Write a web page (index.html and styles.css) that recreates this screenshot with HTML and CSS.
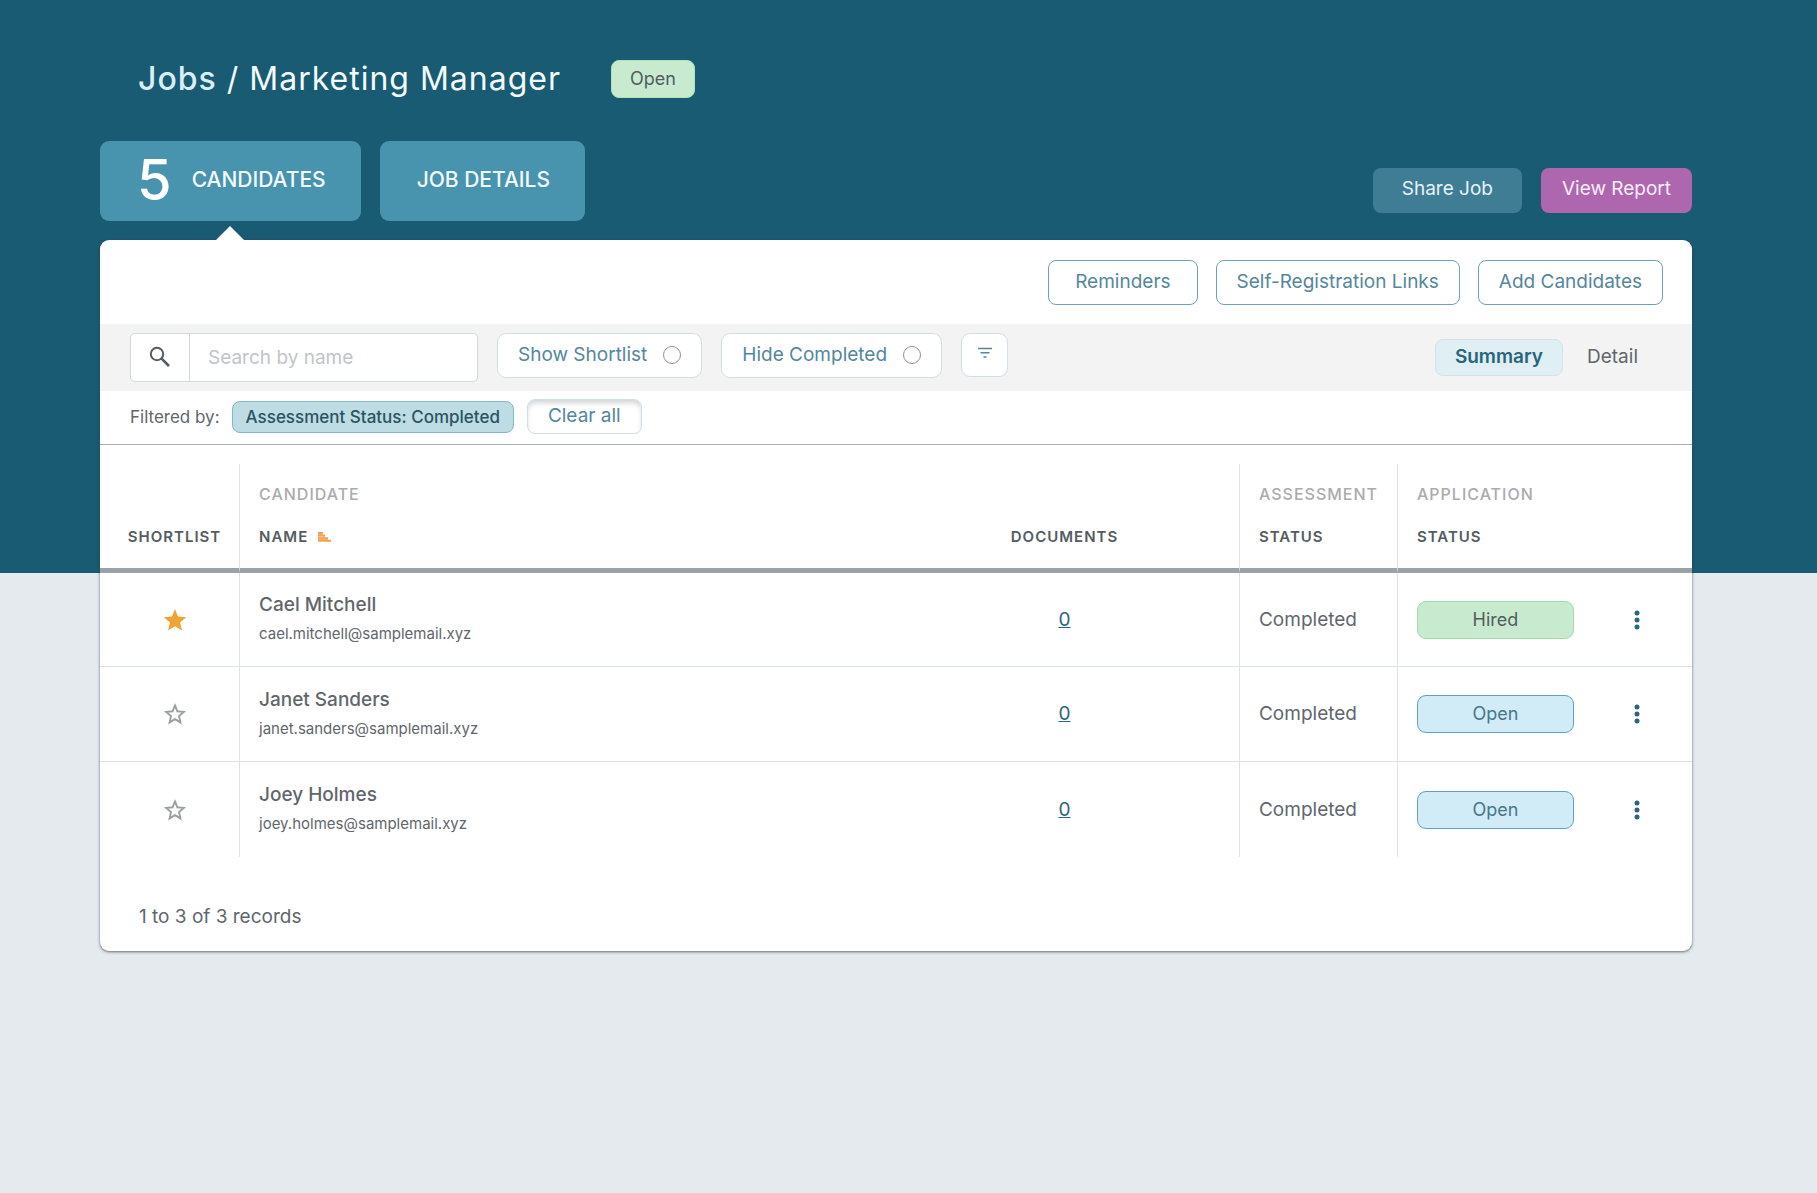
FILE: index.html
```html
<!DOCTYPE html>
<html lang="en">
<head>
<meta charset="utf-8">
<meta name="viewport" content="width=device-width, initial-scale=1">
<title>Jobs / Marketing Manager</title>
<link rel="stylesheet" href="styles.css">
</head>
<body>
<div class="page">
  <header class="title-bar">
    <h1 class="title"><a class="title-link" href="#">Jobs</a> / Marketing Manager</h1>
    <span class="badge">Open</span>
  </header>

  <div class="top-row">
    <nav class="tabs">
      <a class="tab tab-active" href="#"><span class="tab-count">5</span><span>CANDIDATES</span></a>
      <a class="tab" href="#">JOB DETAILS</a>
    </nav>
    <div class="top-actions">
      <button class="btn btn-share" type="button">Share Job</button>
      <button class="btn btn-report" type="button">View Report</button>
    </div>
  </div>

  <main class="card">
    <div class="card-actions">
      <button class="btn btn-outline btn-wide" type="button">Reminders</button>
      <button class="btn btn-outline" type="button">Self-Registration Links</button>
      <button class="btn btn-outline" type="button">Add Candidates</button>
    </div>

    <div class="toolbar">
      <form class="search">
        <button class="search-button" type="button" aria-label="Search">
          <svg width="22" height="22" viewBox="0 0 22 22" fill="none" stroke="#545b61"><circle cx="8" cy="8" r="6.2" stroke-width="2"/><path d="M12.6 12.6L20 20" stroke-width="2.6"/></svg>
        </button>
        <input class="search-input" type="text" placeholder="Search by name" aria-label="Search by name">
      </form>
      <label class="toggle">Show Shortlist <input class="toggle-box" type="checkbox"></label>
      <label class="toggle">Hide Completed <input class="toggle-box" type="checkbox"></label>
      <button class="filter-button" type="button" aria-label="Filters">
        <svg width="16" height="12" viewBox="0 0 16 12" stroke="#54879a" stroke-width="1.6"><path d="M1 1.5H15M3.5 5.8H12.5M6.5 10H9.5"/></svg>
      </button>
      <div class="view-switch">
        <button class="view view-active" type="button">Summary</button>
        <button class="view" type="button">Detail</button>
      </div>
    </div>

    <div class="filters">
      <span class="filters-label">Filtered by:</span>
      <button class="chip" type="button">Assessment Status: Completed</button>
      <button class="clear" type="button">Clear all</button>
    </div>

    <table class="table">
      <colgroup>
        <col class="col-shortlist"><col><col class="col-documents"><col class="col-assessment"><col class="col-application"><col class="col-menu">
      </colgroup>
      <thead>
        <tr class="groups">
          <th class="split"></th>
          <th class="split" colspan="2">CANDIDATE</th>
          <th class="split">ASSESSMENT</th>
          <th colspan="2">APPLICATION</th>
        </tr>
        <tr class="labels">
          <th class="split center shortlist">SHORTLIST</th>
          <th><span class="sortable">NAME
            <svg width="13" height="10" viewBox="0 0 13 10" fill="#f2a44c"><path d="M0 0H5V2H0zM0 2.6H7V4.6H0zM0 5.2H10V7.2H0zM0 7.8H13V9.8H0z"/><path d="M0 2.4H5M0 5H7M0 7.6H10" stroke="#e8935a" stroke-width=".6"/></svg></span></th>
          <th class="split center">DOCUMENTS</th>
          <th class="split">STATUS</th>
          <th>STATUS</th>
          <th></th>
        </tr>
      </thead>
      <tbody>
        <tr>
          <td class="split center shortlist"><button class="icon-button" type="button" aria-label="Remove from shortlist"><svg width="24" height="24" viewBox="0 0 24 24" fill="#f0a235"><path d="M12 1L15 8.6L23.2 9.2L17 14.5L19 22.6L12 18.2L5 22.6L7 14.5L.8 9.2L9 8.6z"/></svg></button></td>
          <td><div class="name">Cael Mitchell</div><div class="email">cael.mitchell@samplemail.xyz</div></td>
          <td class="split center"><a class="docs" href="#">0</a></td>
          <td class="split">Completed</td>
          <td class="status-cell"><span class="status status-hired">Hired</span></td>
          <td class="center"><button class="icon-button" type="button" aria-label="More actions"><svg width="6" height="20" viewBox="0 0 6 20" fill="#2a667c"><circle cx="3" cy="3" r="2.5"/><circle cx="3" cy="10" r="2.5"/><circle cx="3" cy="17" r="2.5"/></svg></button></td>
        </tr>
        <tr>
          <td class="split center shortlist"><button class="icon-button" type="button" aria-label="Add to shortlist"><svg width="24" height="24" viewBox="0 0 24 24" fill="none" stroke="#989fa5" stroke-width="1.9"><path d="M12 3.4L14.4 9.3L20.8 9.9L16 14.1L17.4 20.4L12 17.1L6.6 20.4L8 14.1L3.2 9.9L9.6 9.3z"/></svg></button></td>
          <td><div class="name">Janet Sanders</div><div class="email">janet.sanders@samplemail.xyz</div></td>
          <td class="split center"><a class="docs" href="#">0</a></td>
          <td class="split">Completed</td>
          <td class="status-cell"><span class="status status-open">Open</span></td>
          <td class="center"><button class="icon-button" type="button" aria-label="More actions"><svg width="6" height="20" viewBox="0 0 6 20" fill="#2a667c"><circle cx="3" cy="3" r="2.5"/><circle cx="3" cy="10" r="2.5"/><circle cx="3" cy="17" r="2.5"/></svg></button></td>
        </tr>
        <tr>
          <td class="split center shortlist"><button class="icon-button" type="button" aria-label="Add to shortlist"><svg width="24" height="24" viewBox="0 0 24 24" fill="none" stroke="#989fa5" stroke-width="1.9"><path d="M12 3.4L14.4 9.3L20.8 9.9L16 14.1L17.4 20.4L12 17.1L6.6 20.4L8 14.1L3.2 9.9L9.6 9.3z"/></svg></button></td>
          <td><div class="name">Joey Holmes</div><div class="email">joey.holmes@samplemail.xyz</div></td>
          <td class="split center"><a class="docs" href="#">0</a></td>
          <td class="split">Completed</td>
          <td class="status-cell"><span class="status status-open">Open</span></td>
          <td class="center"><button class="icon-button" type="button" aria-label="More actions"><svg width="6" height="20" viewBox="0 0 6 20" fill="#2a667c"><circle cx="3" cy="3" r="2.5"/><circle cx="3" cy="10" r="2.5"/><circle cx="3" cy="17" r="2.5"/></svg></button></td>
        </tr>
      </tbody>
    </table>

    <footer class="records">1 to 3 of 3 records</footer>
  </main>
</div>
</body>
</html>
```
FILE: styles.css
```css
* { box-sizing: border-box; }

body {
  margin: 0;
  min-height: 100vh;
  background: linear-gradient(#185b72 573px, #e5eaee 573px) no-repeat #e5eaee;
  font-family: Inter, "Liberation Sans", sans-serif;
  font-size: 18px;
  line-height: 24px;
  color: #5f666c;
}

button, input { font: inherit; color: inherit; margin: 0; }
button { cursor: pointer; padding: 0; border: 0; background: none; }
a { color: inherit; text-decoration: none; }
svg { display: block; }

.page { padding: 59px 125px 40px 100px; }

.title-bar {
  display: flex;
  align-items: center;
  gap: 50px;
  padding-left: 38px;
}
.title {
  margin: 0;
  font-size: 32px;
  line-height: 40px;
  font-weight: 400;
  letter-spacing: 1px;
  color: #f4fbfd;
}
.title-link { font-weight: 500; color: #d9eff8; }
.badge {
  padding: 6px 18px;
  border: 1px solid #b5dfbd;
  border-radius: 8px;
  background: #c8ebd0;
  color: #535c5e;
}

.top-row {
  display: flex;
  align-items: center;
  justify-content: space-between;
  margin-top: 42px;
}
.tabs { display: flex; gap: 19px; }
.tab {
  display: flex;
  align-items: center;
  gap: 20px;
  height: 80px;
  padding: 0 35px 2px 37px;
  border-radius: 9px;
  background: #4893ae;
  color: #f3fbfd;
  font-size: 21px;
  font-weight: 500;
}
.tab-active { position: relative; }
.tab-active::after {
  content: "";
  position: absolute;
  top: 85px;
  left: 50%;
  margin-left: -15px;
  border: 15px solid transparent;
  border-top: 0;
  border-bottom-color: #fff;
}
.tab-count { font-size: 56px; color: #fff; }
.top-actions { display: flex; gap: 19px; padding-top: 18px; }

.btn {
  height: 45px;
  padding: 0 21px 2px;
  border-radius: 8px;
  font-size: 19px;
}
.btn-share { padding: 0 29px 2px; background: #3f7d94; color: #e6f3f7; }
.btn-report { background: #ae67ae; color: #fbeffb; }
.btn-outline { padding: 0 20px 2px; border: 1px solid #6fa0b3; background: #fff; color: #54879a; }
.btn-wide { padding: 0 26px 2px; }

.card {
  margin-top: 19px;
  border-radius: 9px;
  background: #fff;
  box-shadow: 0 1px 3px rgba(50, 62, 72, .75);
}
.card-actions {
  display: flex;
  justify-content: flex-end;
  gap: 18px;
  padding: 20px 29px 19px;
}
.toolbar {
  display: flex;
  gap: 19px;
  height: 67px;
  padding: 9px 30px;
  background: #f3f3f4;
}
.search {
  display: flex;
  width: 348px;
  height: 49px;
  border: 1px solid #d2d8dc;
  border-radius: 5px;
  background: #fff;
}
.search-button {
  display: grid;
  place-items: center;
  width: 59px;
  padding-bottom: 2px;
  border-right: 1px solid #d2d8dc;
}
.search-input {
  flex: 1;
  min-width: 0;
  padding: 0 18px;
  border: 0;
  background: none;
  font-size: 19px;
}
.search-input::placeholder { color: #bfc5ca; }
.toggle, .filter-button {
  border: 1px solid #cfdfe6;
  border-radius: 9px;
  background: #fff;
}
.toggle {
  display: flex;
  align-items: center;
  gap: 16px;
  height: 45px;
  padding: 0 20px 2px;
  font-size: 19px;
  color: #54879a;
}
.toggle-box {
  appearance: none;
  width: 18px;
  height: 18px;
  border: 1px solid #8f979d;
  border-radius: 50%;
}
.filter-button {
  display: grid;
  place-items: center;
  width: 47px;
  height: 44px;
  padding-bottom: 5px;
}
.view-switch { display: flex; margin: 6px 0 0 auto; }
.view {
  height: 37px;
  padding: 0 24px 2px;
  border-radius: 8px;
  font-size: 19px;
}
.view-active {
  padding: 0 19px 2px;
  border: 1px solid #cfe3e9;
  background: #dfeff4;
  color: #276579;
  font-weight: 600;
}

.filters {
  display: flex;
  align-items: center;
  height: 54px;
  padding: 0 30px 2px;
  border-bottom: 1px solid #a9b0b5;
}
.filters-label { margin-right: 12px; font-size: 17px; }
.chip {
  height: 32px;
  padding: 0 13px;
  border: 1px solid #86b8c3;
  border-radius: 8px;
  background: #bddce3;
  color: #2b5361;
  font-size: 17px;
  font-weight: 500;
}
.clear {
  height: 35px;
  margin-left: 13px;
  padding: 0 20px 2px;
  border: 1px solid #cfdfe6;
  border-radius: 8px;
  box-shadow: inset 0 4px 5px -1px rgba(70, 85, 95, .25);
  color: #54879a;
  font-size: 19px;
}

.table {
  width: 100%;
  margin-top: 19px;
  border-collapse: separate;
  border-spacing: 0;
  table-layout: fixed;
}
.col-shortlist { width: 140px; }
.col-documents { width: 350px; }
.col-assessment { width: 158px; }
.col-application { width: 184px; }
.col-menu { width: 110px; }

.table th, .table td { padding: 0 19px; text-align: left; }
.table .split { border-right: 1px solid #dde2e5; }
.table .center { padding: 0; text-align: center; }
.table .shortlist { padding-left: 10px; }
.table th { line-height: 20px; }
.groups th {
  height: 40px;
  padding-top: 20px;
  color: #a9abae;
  font-size: 16px;
  font-weight: 500;
  letter-spacing: 1px;
}
.table .labels th {
  padding-top: 23px;
  padding-bottom: 21px;
  border-bottom: 5px solid #9aa2a8;
  color: #545c62;
  font-size: 15px;
  font-weight: 600;
  letter-spacing: 1px;
}
.sortable { display: flex; align-items: center; gap: 10px; }
.table td { height: 94px; border-bottom: 1px solid #dde2e5; font-size: 19px; }
.table tr + tr td { height: 95px; }
.table tbody tr:last-child td { border-bottom: 0; }
.table .status-cell { padding-right: 8px; }
.name { line-height: 28px; font-weight: 500; }
.email { margin-top: 1px; font-size: 15px; line-height: 28px; }
.docs { color: #2a667c; text-decoration: underline; }
.icon-button { display: block; margin: 0 auto; }
.status {
  display: block;
  padding: 6px 0;
  border: 1px solid;
  border-radius: 9px;
  font-size: 18px;
  text-align: center;
}
.status-hired { border-color: #a3d9ad; background: #c8ebd0; color: #535c5e; }
.status-open { border-color: #5fa3bd; background: #d1ebf7; color: #4a7687; }

.records { padding: 48px 39px 22px; font-size: 19px; }
```
